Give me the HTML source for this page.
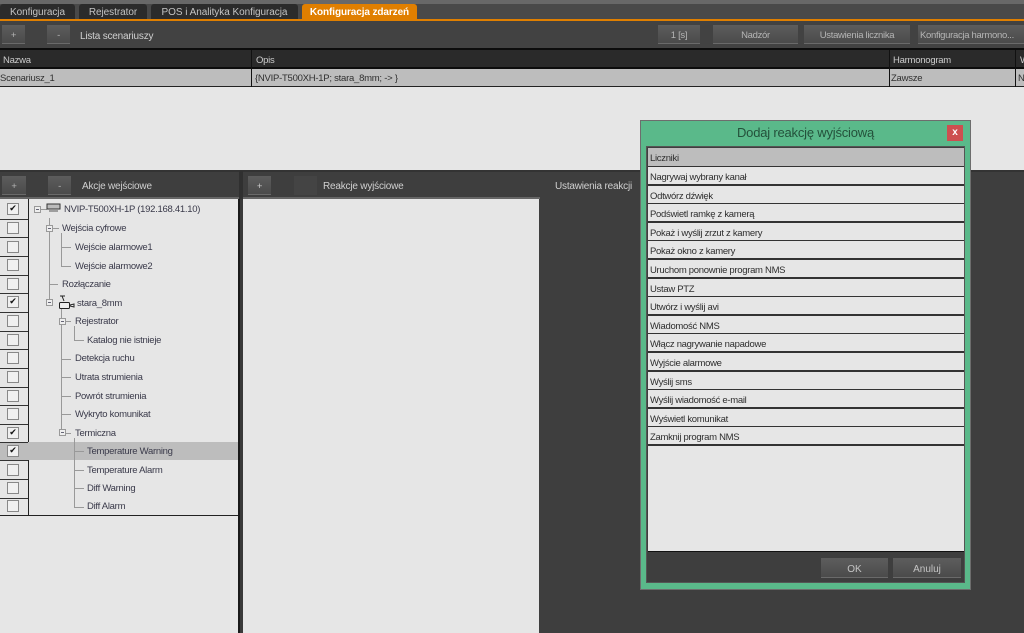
<!DOCTYPE html>
<html lang="pl"><head><meta charset="utf-8"><title>Konfiguracja zdarzeń</title>
<style>
html,body{margin:0;padding:0;background:#3e3e3e}
body{position:relative;width:1024px;height:633px;overflow:hidden;font:10px/14px "Liberation Sans",sans-serif;color:#333}
div{position:absolute;box-sizing:border-box;white-space:nowrap}
.tab{top:4px;height:15px;background:#2b2b2b;color:#c4c4c4;border-radius:3px 3px 0 0;text-align:center;line-height:17px;letter-spacing:-.05px}
.btn{background:linear-gradient(#5d5d5d,#4b4b4b);color:#b5b5b5;text-align:center;border-bottom:1px solid #6a6a6a;line-height:22px;font-size:9.5px;letter-spacing:-.3px}
.lbl{color:#d0d0d0;letter-spacing:-.2px;margin-top:2px}
.th{top:50px;height:17px;line-height:21px;color:#ccc;font-size:9.5px;letter-spacing:-.25px}
.td{top:69px;height:17px;line-height:19px;color:#2f2f2f;font-size:9.5px;letter-spacing:-.25px}
.vb{width:1px;background:#111}
.cb{left:7px;width:12px;height:12px;background:#f0f0f0;border:1px solid #888;color:#111;font:bold 9px/10px "DejaVu Sans",sans-serif;text-align:center}
.t{color:#3a3a4a;font-size:9.500px;letter-spacing:-.28px;height:14px;margin-top:1px}
.h{background:#999;height:1px}.v{background:#999;width:1px}
.ex{width:7px;height:7px;border:1px solid #999;background:#eee}
.ex:after{content:"";position:absolute;left:1px;top:2px;width:3px;height:1px;background:#667}
.li{left:648px;width:316px;height:17px;background:#e6e6e6;padding-left:2px;line-height:21px;color:#2e2e2e;font-size:9.5px;letter-spacing:-.3px}
</style></head><body>
<div style="left:0;top:0;width:1024px;height:4px;background:#686868"></div>
<div style="left:0;top:4px;width:1024px;height:15px;background:#494949"></div>
<div class="tab" style="left:0;width:75px">Konfiguracja</div>
<div class="tab" style="left:79px;width:68px">Rejestrator</div>
<div class="tab" style="left:151px;width:147px">POS i Analityka Konfiguracja</div>
<div class="tab" style="left:302px;width:115px;background:#e07f00;color:#fff;font-weight:bold;letter-spacing:-.1px">Konfiguracja zdarzeń</div>
<div style="left:0;top:19px;width:1024px;height:2px;background:#e07f00"></div>
<div style="left:0;top:21px;width:1024px;height:27px;background:#424242"></div>
<div class="btn" style="left:2px;top:25px;width:23px;height:19px">+</div>
<div class="btn" style="left:47px;top:25px;width:23px;height:19px">-</div>
<div class="lbl" style="left:80px;top:28px">Lista scenariuszy</div>
<div class="btn" style="left:658px;top:25px;width:42px;height:19px">1 [s]</div>
<div class="btn" style="left:713px;top:25px;width:85px;height:19px">Nadzór</div>
<div class="btn" style="left:804px;top:25px;width:106px;height:19px">Ustawienia licznika</div>
<div class="btn" style="left:918px;top:25px;width:106px;height:19px;text-align:left;padding-left:2px">Konfiguracja harmono...</div>
<div style="left:0;top:48px;width:1024px;height:2px;background:#0c0c0c"></div>
<div style="left:0;top:50px;width:1024px;height:17px;background:#2a2a2a"></div>
<div style="left:0;top:67px;width:1024px;height:2px;background:#0c0c0c"></div>
<div style="left:0;top:69px;width:1024px;height:17px;background:#bdbdbd"></div>
<div style="left:0;top:86px;width:1024px;height:84px;background:#e6e6e6;border-top:1px solid #222"></div>
<div class="vb" style="left:251px;top:50px;height:37px"></div>
<div class="vb" style="left:889px;top:50px;height:37px"></div>
<div class="vb" style="left:1015px;top:50px;height:37px"></div>
<div class="th" style="left:3px">Nazwa</div><div class="th" style="left:256px">Opis</div><div class="th" style="left:893px">Harmonogram</div><div class="th" style="left:1020px">W</div>
<div class="td" style="left:0">Scenariusz_1</div><div class="td" style="left:255px">{NVIP-T500XH-1P; stara_8mm; -&gt; }</div><div class="td" style="left:891px">Zawsze</div><div class="td" style="left:1018px">N</div>

<div style="left:0;top:170px;width:1024px;height:463px;background:#3e3e3e"></div>
<div style="left:0;top:170px;width:1024px;height:2px;background:#333"></div>
<div style="left:0;top:197px;width:540px;height:2px;background:#666"></div>
<div style="left:239px;top:171px;width:4px;height:28px;background:#303030"></div>
<div class="btn" style="left:2px;top:176px;width:24px;height:19px">+</div>
<div class="btn" style="left:48px;top:176px;width:23px;height:19px">-</div>
<div class="lbl" style="left:82px;top:178px">Akcje wejściowe</div>
<div class="btn" style="left:248px;top:176px;width:23px;height:19px;color:#ccc">+</div>
<div style="left:294px;top:176px;width:23px;height:19px;background:#444"></div>
<div class="lbl" style="left:323px;top:178px">Reakcje wyjściowe</div>
<div class="lbl" style="left:555px;top:178px">Ustawienia reakcji</div>

<div style="left:0;top:199px;width:238px;height:316px;background:#e6e6e6"></div>
<div style="left:0;top:515px;width:239px;height:118px;background:#e6e6e6;border-top:1px solid #222"></div>
<div style="left:28px;top:199px;width:1px;height:316px;background:#222"></div>
<div style="left:238px;top:199px;width:2px;height:434px;background:#1a1a1a"></div>
<div style="left:240px;top:199px;width:3px;height:434px;background:#3a3a3a"></div>
<div style="left:243px;top:199px;width:296px;height:434px;background:#e6e6e6"></div>
<div style="left:0;top:442px;width:238px;height:18px;background:#bdbdbd"></div>

<div style="left:0;top:218.500px;width:28px;height:1px;background:#333"></div>
<div style="left:0;top:237px;width:28px;height:1px;background:#333"></div>
<div style="left:0;top:256px;width:28px;height:1px;background:#333"></div>
<div style="left:0;top:274.500px;width:28px;height:1px;background:#333"></div>
<div style="left:0;top:293px;width:28px;height:1px;background:#333"></div>
<div style="left:0;top:312px;width:28px;height:1px;background:#333"></div>
<div style="left:0;top:330.500px;width:28px;height:1px;background:#333"></div>
<div style="left:0;top:349px;width:28px;height:1px;background:#333"></div>
<div style="left:0;top:368px;width:28px;height:1px;background:#333"></div>
<div style="left:0;top:386.500px;width:28px;height:1px;background:#333"></div>
<div style="left:0;top:405px;width:28px;height:1px;background:#333"></div>
<div style="left:0;top:423.500px;width:28px;height:1px;background:#333"></div>
<div style="left:0;top:442px;width:28px;height:1px;background:#333"></div>
<div style="left:0;top:460px;width:28px;height:1px;background:#333"></div>
<div style="left:0;top:479px;width:28px;height:1px;background:#333"></div>
<div style="left:0;top:497.500px;width:28px;height:1px;background:#333"></div>

<div class="cb" style="top:203px">✔</div><div class="cb" style="top:222px"></div><div class="cb" style="top:241px"></div><div class="cb" style="top:259px"></div><div class="cb" style="top:278px"></div><div class="cb" style="top:296px">✔</div><div class="cb" style="top:315px"></div><div class="cb" style="top:334px"></div><div class="cb" style="top:352px"></div><div class="cb" style="top:371px"></div><div class="cb" style="top:390px"></div><div class="cb" style="top:408px"></div><div class="cb" style="top:427px">✔</div><div class="cb" style="top:445px">✔</div><div class="cb" style="top:464px"></div><div class="cb" style="top:482px"></div><div class="cb" style="top:500px"></div>

<div class="v" style="left:49px;top:218px;height:85px"></div>
<div class="v" style="left:61px;top:233px;height:33px"></div>
<div class="h" style="left:61px;top:247px;width:10px"></div><div class="h" style="left:61px;top:266px;width:10px"></div>
<div class="h" style="left:49px;top:284px;width:9px"></div>
<div class="v" style="left:61px;top:308px;height:125px"></div>
<div class="v" style="left:74px;top:326px;height:14px"></div>
<div class="h" style="left:74px;top:340px;width:10px"></div>
<div class="h" style="left:61px;top:359px;width:10px"></div><div class="h" style="left:61px;top:377px;width:10px"></div><div class="h" style="left:61px;top:396px;width:10px"></div><div class="h" style="left:61px;top:414px;width:10px"></div>
<div class="v" style="left:74px;top:438px;height:69px"></div>
<div class="h" style="left:74px;top:451px;width:10px"></div><div class="h" style="left:74px;top:470px;width:10px"></div><div class="h" style="left:74px;top:488px;width:10px"></div><div class="h" style="left:74px;top:507px;width:10px"></div>
<div class="ex" style="left:34px;top:206px"></div><div class="ex" style="left:46px;top:225px"></div><div class="ex" style="left:46px;top:299px"></div><div class="ex" style="left:59px;top:318px"></div><div class="ex" style="left:59px;top:429px"></div>
<div class="h" style="left:41px;top:209px;width:6px"></div><div class="h" style="left:53px;top:228px;width:6px"></div><div class="h" style="left:66px;top:321px;width:5px"></div><div class="h" style="left:66px;top:433px;width:5px"></div>
<svg style="position:absolute;left:46px;top:203px" width="16" height="10" viewBox="0 0 16 10"><rect x="1" y="1" width="13" height="5" fill="#bbb" stroke="#333"/><path d="M3 8h9" stroke="#555"/></svg>
<svg style="position:absolute;left:58px;top:295px" width="18" height="16" viewBox="0 0 18 16"><path d="M2 1h5M4 1l2 5" stroke="#222" fill="none"/><rect x="1.500" y="7.500" width="10" height="6" rx="1" fill="#eee" stroke="#222"/><path d="M12 10l4-1v3l-4-1z" fill="#eee" stroke="#222"/></svg>

<div class="t" style="left:64px;top:202px">NVIP-T500XH-1P (192.168.41.10)</div>
<div class="t" style="left:62px;top:221px">Wejścia cyfrowe</div>
<div class="t" style="left:75px;top:240px">Wejście alarmowe1</div>
<div class="t" style="left:75px;top:259px">Wejście alarmowe2</div>
<div class="t" style="left:62px;top:277px">Rozłączanie</div>
<div class="t" style="left:77px;top:296px">stara_8mm</div>
<div class="t" style="left:75px;top:314px">Rejestrator</div>
<div class="t" style="left:87px;top:333px">Katalog nie istnieje</div>
<div class="t" style="left:75px;top:351px">Detekcja ruchu</div>
<div class="t" style="left:75px;top:370px">Utrata strumienia</div>
<div class="t" style="left:75px;top:389px">Powrót strumienia</div>
<div class="t" style="left:75px;top:407px">Wykryto komunikat</div>
<div class="t" style="left:75px;top:426px">Termiczna</div>
<div class="t" style="left:87px;top:444px">Temperature Warning</div>
<div class="t" style="left:87px;top:463px">Temperature Alarm</div>
<div class="t" style="left:87px;top:481px">Diff Warning</div>
<div class="t" style="left:87px;top:499px">Diff Alarm</div>

<div style="left:640px;top:120px;width:331px;height:470px;background:#5ab98a;border:1px solid #6d6d6d"></div>
<div style="left:646px;top:146px;width:319px;height:437px;background:#3e3e3e;border:1px solid #555"></div>
<div style="left:641px;top:124px;width:329px;height:18px;text-align:center;font-size:13px;line-height:18px;color:#24513b;letter-spacing:-.2px">Dodaj reakcję wyjściową</div>
<div style="left:947px;top:125px;width:16px;height:16px;background:#cd4f50;color:#fff;text-align:center;font-weight:bold;line-height:15px">x</div>
<div style="left:648px;top:148px;width:316px;height:404px;background:#e6e6e6;border-bottom:1px solid #111"></div>
<div style="left:648px;top:148px;width:316px;height:298px;background:#333"></div>
<div class="li" style="top:148px;height:18px;background:#bdbdbd">Liczniki</div>
<div class="li" style="top:167px">Nagrywaj wybrany kanał</div>
<div class="li" style="top:186px">Odtwórz dźwięk</div>
<div class="li" style="top:204px">Podświetl ramkę z kamerą</div>
<div class="li" style="top:223px">Pokaż i wyślij zrzut z kamery</div>
<div class="li" style="top:241px">Pokaż okno z kamery</div>
<div class="li" style="top:260px">Uruchom ponownie program NMS</div>
<div class="li" style="top:279px">Ustaw PTZ</div>
<div class="li" style="top:297px">Utwórz i wyślij avi</div>
<div class="li" style="top:316px">Wiadomość NMS</div>
<div class="li" style="top:334px">Włącz nagrywanie napadowe</div>
<div class="li" style="top:353px">Wyjście alarmowe</div>
<div class="li" style="top:372px">Wyślij sms</div>
<div class="li" style="top:390px">Wyślij wiadomość e-mail</div>
<div class="li" style="top:409px">Wyświetl komunikat</div>
<div class="li" style="top:427px">Zamknij program NMS</div>
<div class="btn" style="left:821px;top:558px;width:67px;height:20px;line-height:23px;color:#c4c4c4;font-size:10px;letter-spacing:0">OK</div>
<div class="btn" style="left:893px;top:558px;width:68px;height:20px;line-height:23px;color:#c4c4c4;font-size:10px;letter-spacing:0">Anuluj</div>
</body></html>
